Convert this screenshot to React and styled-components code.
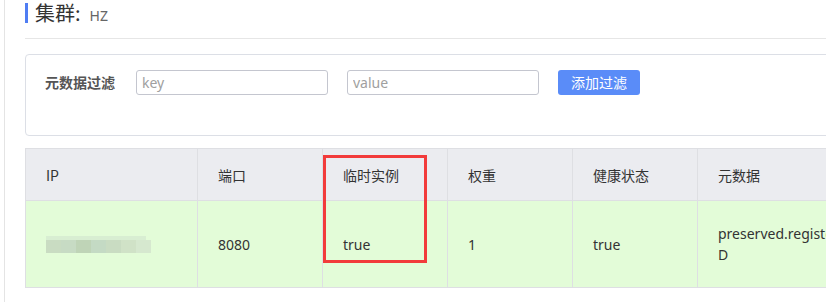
import styled, { createGlobalStyle } from "styled-components";

const GlobalStyle = createGlobalStyle`
  html, body {
    margin: 0;
    padding: 0;
    background: #fff;
    overflow: hidden;
  }
  body {
    font-family: "Noto Sans", "Noto Sans CJK SC", sans-serif;
    color: #333;
  }
`;

const Page = styled.div`
  margin-left: 4px;
  border-left: 1px solid #e4e4e4;
  min-height: 302px;
  width: 1200px;
  padding: 3px 0 0 20px;
  box-sizing: border-box;
`;

const TitleRow = styled.div`
  display: flex;
  align-items: baseline;
  height: 20px;
  border-left: 3px solid #4f7df3;
  padding-left: 7px;
`;

const Title = styled.span`
  font-family: "Noto Sans CJK SC", sans-serif;
  font-size: 20px;
  line-height: 20px;
  color: #333;
`;

const SubTitle = styled.span`
  font-family: "Noto Sans", "Liberation Sans", sans-serif;
  font-size: 14px;
  color: #666;
  margin-left: 9px;
`;

const Divider = styled.div`
  margin-top: 15px;
  height: 1px;
  background: #e6e6e6;
`;

const FilterCard = styled.div`
  margin-top: 15px;
  height: 82px;
  border: 1px solid #dcdfe6;
  border-radius: 4px;
  padding: 15px 19px;
  box-sizing: border-box;
  display: flex;
  align-items: flex-start;
`;

const FilterLabel = styled.label`
  font-family: "Noto Sans CJK SC", sans-serif;
  font-weight: 700;
  font-size: 14px;
  color: #555;
  line-height: 24px;
  margin-right: 21px;
`;

const Input = styled.input`
  width: 192px;
  height: 25px;
  box-sizing: border-box;
  border: 1px solid #c4c6cf;
  border-radius: 3px;
  padding: 0 5px;
  font-family: "Noto Sans", "Liberation Sans", sans-serif;
  font-size: 14px;
  color: #333;
  margin-right: 19px;
  outline: none;
  &::placeholder {
    color: #a0a0a0;
  }
`;

const Button = styled.button`
  width: 82px;
  height: 25px;
  border: none;
  border-radius: 3px;
  background: #5a8cf8;
  color: #fff;
  font-family: "Noto Sans CJK SC", sans-serif;
  font-size: 14px;
  line-height: 25px;
  padding: 0;
  cursor: pointer;
`;

const TableWrap = styled.div`
  position: relative;
  margin-top: 12px;
`;

const Table = styled.table`
  border-collapse: collapse;
  table-layout: fixed;
  width: 1110px;
  font-size: 14px;
`;

const Th = styled.th`
  width: ${(p) => p.$w}px;
  height: 52px;
  box-sizing: border-box;
  background: #ebecf0;
  border: 1px solid #dedfe3;
  padding: 0 20px;
  text-align: left;
  font-weight: 400;
  font-family: "Noto Sans CJK SC", sans-serif;
  color: #333;
`;

const Td = styled.td`
  height: 87px;
  box-sizing: border-box;
  background: #e3fcd8;
  border: 1px solid #dedfe3;
  padding: 0 20px;
  line-height: 21px;
  word-break: break-all;
  color: #333;
  font-family: "Noto Sans", "Noto Sans CJK SC", sans-serif;
`;

const Blur = styled.div`
  position: relative;
  display: flex;
  width: 105px;
  height: 17px;
  align-items: flex-end;
`;

const BlurBlock = styled.span`
  width: 15px;
  height: 13px;
  background: ${(p) => p.$c};
`;

const BlurTop = styled.span`
  position: absolute;
  left: 0;
  top: 0;
  width: 100px;
  height: 4px;
  background: #d8eed2;
`;

const Highlight = styled.div`
  position: absolute;
  left: 298px;
  top: 7px;
  width: 104px;
  height: 108px;
  box-sizing: border-box;
  border: 3px solid #f23b3b;
  pointer-events: none;
`;

const blurColors = ["#c9dcc2", "#c7dbc4", "#bfd4b7", "#c4dac4", "#c9dcc2", "#d0e2c7", "#d6e8cf"];

const columns = [
  { title: "IP", w: 172 },
  { title: "端口", w: 125 },
  { title: "临时实例", w: 125 },
  { title: "权重", w: 125 },
  { title: "健康状态", w: 125 },
  { title: "元数据", w: 310 },
  { title: "操作", w: 128 },
];

export default function App() {
  return (
    <>
      <GlobalStyle />
      <Page>
        <TitleRow>
          <Title>集群:</Title>
          <SubTitle>HZ</SubTitle>
        </TitleRow>
        <Divider />
        <FilterCard>
          <FilterLabel>元数据过滤</FilterLabel>
          <Input placeholder="key" />
          <Input placeholder="value" />
          <Button>添加过滤</Button>
        </FilterCard>
        <TableWrap>
          <Table>
            <thead>
              <tr>
                {columns.map((c) => (
                  <Th key={c.title} $w={c.w}>
                    {c.title}
                  </Th>
                ))}
              </tr>
            </thead>
            <tbody>
              <tr>
                <Td>
                  <Blur>
                    <BlurTop />
                    {blurColors.map((c, i) => (
                      <BlurBlock key={i} $c={c} />
                    ))}
                  </Blur>
                </Td>
                <Td>8080</Td>
                <Td>true</Td>
                <Td>1</Td>
                <Td>true</Td>
                <Td>preserved.register.source=SPRING_CLOUD</Td>
                <Td>编辑</Td>
              </tr>
            </tbody>
          </Table>
          <Highlight />
        </TableWrap>
      </Page>
    </>
  );
}
